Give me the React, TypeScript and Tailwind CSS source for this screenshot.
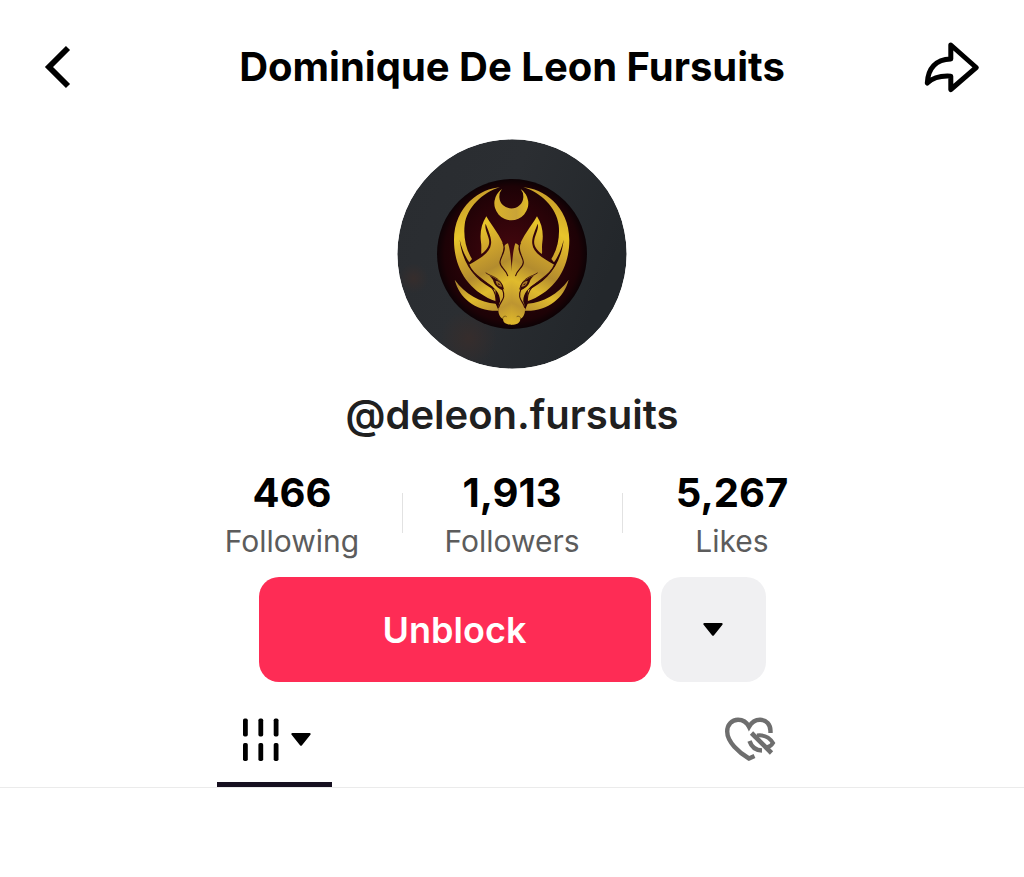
const STATS = [
  { value: '466', label: 'Following' },
  { value: '1,913', label: 'Followers' },
  { value: '5,267', label: 'Likes' },
];

function BackIcon() {
  return (
    <svg className="w-7 h-11" viewBox="1 0 28 44" fill="none" stroke="currentColor" strokeWidth={5.8}>
      <path d="M25 3L6 22l19 19" />
    </svg>
  );
}

function ShareIcon() {
  return (
    <svg className="w-14 h-13" viewBox="1 0 56 52" fill="none" stroke="currentColor" strokeWidth={5} strokeLinejoin="round">
      <path d="M27.8 4L53.2 26.5L27.8 48.5V35.2C17 34.5 10 36.5 4.3 42C5 27.5 12.5 18.5 27.8 18Z" />
    </svg>
  );
}

function CaretIcon() {
  return (
    <svg className="w-5 h-4" viewBox="0 0 20 16" fill="currentColor">
      <path d="M1.4 1h17.2c1 0 1.4 1 .8 1.7L11 13.2c-.6.7-1.4.7-2 0L.6 2.700C0 2 .4 1 1.400 1z" />
    </svg>
  );
}

function GridIcon() {
  return (
    <svg className="w-10 h-11" viewBox="0 0 40 44" fill="currentColor">
      {[4, 19.4, 34.7].map((x) => (
        <g key={x}>
          <rect x={x} y="0.5" width="4.8" height="18" rx="1.7" />
          <rect x={x} y="25" width="4.8" height="18" rx="1.7" />
        </g>
      ))}
    </svg>
  );
}

function HiddenLikesIcon() {
  return (
    <svg className="w-13 h-11" viewBox="0 0 52 44" fill="none" stroke="currentColor" strokeWidth={4.4}>
      <path d="M30.5 39L25 41.5C15 35.5 3.2 25 3.2 14.5C3.2 7.5 8 2.8 14 2.8C19 2.8 22.8 5.5 25 9.8C27.5 5.5 31.5 2.8 36 2.8C42.5 2.8 46.5 7.5 46.5 14V16" />
      <path d="M27.5 16L47.5 36" strokeWidth={4.6} />
      <path d="M33 18.5C40.5 17.5 45.5 20.500 49 26C47.5 28.5 46 29.8 42.5 30.5" strokeWidth={4} />
      <path d="M25.5 24C27.5 30 32 33.300 38 33.500" strokeWidth={4.4} />
    </svg>
  );
}

// Left half of the emblem; the right half is the same shapes mirrored
function FoxHalf() {
  return (
    <>
      <g fill="url(#gold)">
        <path d="M204 37C148 40 66 92 66 196C66 280 110 350 192 379L190 345C138 322 92 275 83 194C91 228 101 246 112 262L120 252C101 222 94 184 98 150C104 98 152 52 204 37Z" />
        <path d="M68 314C82 370 132 410 200 407L191 386C145 382 100 358 68 314Z" />
        <path d="M163 124C148 147 143 174 147 202C149 215 147 226 148 237C166 224 174 211 171 194C167 174 157 162 161 146C168 166 180 188 177 207C175 231 148 249 111 269C121 294 145 312 166 324C190 338 206 358 204 380C195 399 198 426 213 431C213 444 224 449 240 449V290C237 262 236 228 228 205C222 207 219 210 216 214C206 184 183 158 163 124Z" />
      </g>
      <g fill="none" stroke="#35080b" strokeWidth={3.5} strokeLinecap="round">
        <path d="M213 204C225 226 205 245 204 261C203 277 221 282 227 302" />
        <path d="M110 268C122 302 160 315 179 338C192 353 193 369 192 385" />
        <path d="M211 342C224 372 205 377 200 397" />
        <path d="M162 294C180 307 205 304 215 342" strokeWidth={2.5} />
      </g>
      <path d="M168 299C180 306 205 313 213 333L213 346C201 341 188 335 183 315C179 308 174 303 168 299Z" fill="#35080b" />
      <path d="M191 318C199 318 207 323 210 335C201 336 193 330 191 318Z" fill="#a87925" />
      <path d="M197 323l9 8-7-2z" fill="#35080b" />
      <path d="M212 431C212 425 219 421 224 425" fill="none" stroke="#806019" strokeWidth={3} />
    </>
  );
}

function Avatar() {
  return (
    <svg className="w-[230px] h-[230px]" viewBox="-105 -108 690 690" role="img" aria-label="Dominique De Leon Fursuits">
      <defs>
        <linearGradient id="gold" gradientUnits="userSpaceOnUse" x1="70" y1="80" x2="250" y2="430">
          <stop offset="0" stopColor="#c79c2a" />
          <stop offset=".25" stopColor="#e8c52b" />
          <stop offset=".42" stopColor="#cfa42c" />
          <stop offset=".58" stopColor="#b38c2e" />
          <stop offset=".72" stopColor="#e0bb2d" />
          <stop offset=".88" stopColor="#bd9531" />
          <stop offset="1" stopColor="#dcb52b" />
        </linearGradient>
        <linearGradient id="moon" x1="0" y1="0" x2="1" y2="0">
          <stop offset="0" stopColor="#d9b22b" />
          <stop offset=".65" stopColor="#c9a337" />
          <stop offset="1" stopColor="#e2bd26" />
        </linearGradient>
        <radialGradient id="maroon">
          <stop offset="0" stopColor="#45070e" />
          <stop offset=".65" stopColor="#290308" />
          <stop offset=".9" stopColor="#1d0206" />
          <stop offset="1" stopColor="#0c0205" />
        </radialGradient>
        <radialGradient id="ember">
          <stop offset="0" stopColor="#362d2c" />
          <stop offset="1" stopColor="#362d2c" stopOpacity="0" />
        </radialGradient>
        <linearGradient id="slate" x1="0" y1="0" x2="1" y2=".4">
          <stop offset="0" stopColor="#292c30" />
          <stop offset=".5" stopColor="#2b2e32" />
          <stop offset="1" stopColor="#23272b" />
        </linearGradient>
        <clipPath id="disc">
          <circle cx="240" cy="237" r="344" />
        </clipPath>
      </defs>
      <g clipPath="url(#disc)">
        <circle cx="240" cy="237" r="344" fill="url(#slate)" />
        <circle cx="110" cy="490" r="85" fill="url(#ember)" />
        <circle cx="-55" cy="310" r="45" fill="url(#ember)" />
      </g>
      <circle cx="240" cy="237" r="225" fill="url(#maroon)" />
      <FoxHalf />
      <g transform="translate(478 0) scale(-1 1)">
        <FoxHalf />
      </g>
      <path d="M210 42A51 51 0 1 0 266 42A36 36 0 1 1 210 42Z" fill="url(#moon)" />
    </svg>
  );
}

export default function App() {
  return (
    <main className="bg-white text-black font-['Inter','Noto_Sans',sans-serif]">
      <header className="flex items-center justify-between h-[134px] px-11">
        <button type="button" aria-label="Back" className="w-14">
          <BackIcon />
        </button>
        <h1 className="text-[40px] leading-12 font-bold text-center">Dominique De Leon Fursuits</h1>
        <button type="button" aria-label="Share" className="w-14">
          <ShareIcon />
        </button>
      </header>

      <section className="flex flex-col items-center pt-[5px]">
        <Avatar />
        <p className="mt-6 text-[40px] leading-11 font-semibold text-[#202020]">@deleon.fursuits</p>

        <dl className="grid grid-cols-3 w-[660px] mt-8">
          {STATS.map((stat, i) => (
            <div key={stat.label} className="relative flex flex-col-reverse items-center">
              <dt className="text-[30px] leading-10 text-[#5c5c5c]">{stat.label}</dt>
              <dd className="text-[40px] leading-12 mb-1 font-bold">{stat.value}</dd>
              {i > 0 && <span className="absolute left-0 top-6 w-px h-10 bg-[#e2e2e2]" />}
            </div>
          ))}
        </dl>

        <div className="flex gap-2.5 mt-4">
          <button type="button" className="w-[392px] h-[105px] rounded-[20px] bg-[#fe2c55] text-white text-4xl font-semibold">
            Unblock
          </button>
          <button type="button" aria-label="More options" className="flex items-center justify-center w-[105px] h-[105px] rounded-[20px] bg-[#f0f0f2]">
            <CaretIcon />
          </button>
        </div>
      </section>

      <nav className="grid grid-cols-2 h-[106px] px-[37px] border-b border-[#ebebeb]">
        <button type="button" aria-label="Videos" className="flex flex-col items-center justify-end">
          <span className="flex items-center gap-3 h-11 mb-5">
            <GridIcon />
            <CaretIcon />
          </span>
          <span className="w-[115px] h-[5px] bg-[#161020]" />
        </button>
        <button type="button" aria-label="Liked videos" className="flex items-center justify-center pt-2 text-[#6e6e6e]">
          <HiddenLikesIcon />
        </button>
      </nav>
    </main>
  );
}
